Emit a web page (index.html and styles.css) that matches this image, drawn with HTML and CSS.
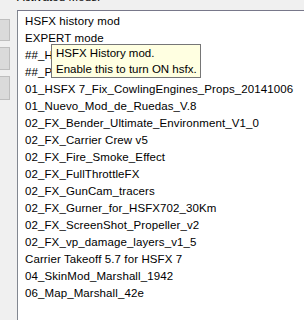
FILE: index.html
```html
<!DOCTYPE html>
<html lang="en">
<head>
    <meta charset="UTF-8">
    <title>Mods</title>
    <link rel="stylesheet" href="styles.css">
</head>
<body>
    <div class="window">
        <div class="side">
            <button class="side-btn"></button>
            <button class="side-btn"></button>
            <button class="side-btn"></button>
        </div>
        <div class="panel">
            <div class="panel-label">Activated Mods:</div>
            <ul class="mods">
                <li>HSFX history mod</li>
                <li>EXPERT mode</li>
                <li>##_HSFX_Core</li>
                <li>##_Patch</li>
                <li>01_HSFX 7_Fix_CowlingEngines_Props_20141006</li>
                <li>01_Nuevo_Mod_de_Ruedas_V.8</li>
                <li>02_FX_Bender_Ultimate_Environment_V1_0</li>
                <li>02_FX_Carrier Crew v5</li>
                <li>02_FX_Fire_Smoke_Effect</li>
                <li>02_FX_FullThrottleFX</li>
                <li>02_FX_GunCam_tracers</li>
                <li>02_FX_Gurner_for_HSFX702_30Km</li>
                <li>02_FX_ScreenShot_Propeller_v2</li>
                <li>02_FX_vp_damage_layers_v1_5</li>
                <li>Carrier Takeoff 5.7 for HSFX 7</li>
                <li>04_SkinMod_Marshall_1942</li>
                <li>06_Map_Marshall_42e</li>
            </ul>
        </div>
    </div>
    <div class="tooltip">
        <p>HSFX History mod.</p>
        <p>Enable this to turn ON hsfx.</p>
    </div>
</body>
</html>
```

FILE: styles.css
```css
*{
    box-sizing: border-box;
    margin: 0;
    padding: 0;
}
body{
    background-color: rgb(240, 240, 240);
    color: black;
    font-family: "Liberation Sans", Arial, sans-serif;
    font-size: 11.5px;
    letter-spacing: 0.1px;
    overflow: hidden;
    height: 320px;
}
.window{
    display: flex;
}
.side{
    display: flex;
    flex-direction: column;
    gap: 6px;
    width: 17px;
    padding-top: 19px;
}
.side-btn{
    width: 10px;
    height: 22px;
    background-color: rgb(218, 218, 218);
    border: 1px solid rgb(190, 190, 190);
    border-left: none;
}
.side-btn:nth-child(2){
    height: 23px;
}
.side-btn:nth-child(3){
    height: 24px;
}
.panel{
    flex: 1;
}
.panel-label{
    height: 14px;
    line-height: 14px;
    margin-top: -10px;
    margin-bottom: 6px;
}
.mods{
    list-style: none;
    height: 340px;
    margin-right: -20px;
    background-color: white;
    border: 1px solid rgb(130, 135, 144);
    border-top-color: rgb(120, 120, 138);
    padding-top: 2px;
}
.mods li{
    height: 17px;
    line-height: 17px;
    padding-left: 7px;
    white-space: nowrap;
}
.tooltip{
    position: absolute;
    left: 51px;
    top: 44px;
    width: 150px;
    height: 34px;
    padding: 0 4px;
    background-color: rgb(255, 255, 225);
    border: 1px solid rgb(118, 118, 118);
    font-size: 11.5px;
    letter-spacing: 0;
    line-height: 16px;
    white-space: nowrap;
}
```
